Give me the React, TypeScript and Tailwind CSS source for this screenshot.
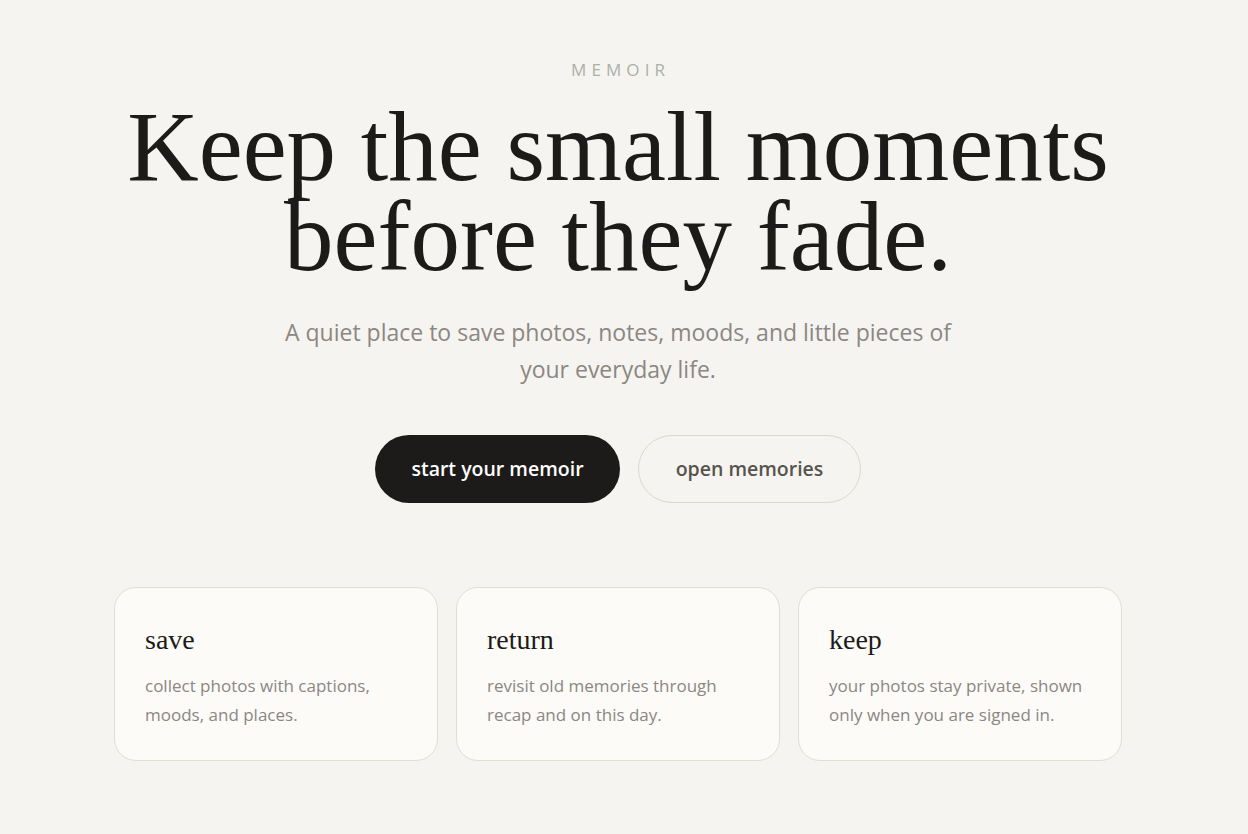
const serif = "font-['Georgia','Liberation_Serif','DejaVu_Serif',serif]";
const sans = "font-['Segoe_UI','Open_Sans','Noto_Sans',sans-serif]";

const features = [
  {
    title: "save",
    body: "collect photos with captions, moods, and places.",
  },
  {
    title: "return",
    body: "revisit old memories through recap and on this day.",
  },
  {
    title: "keep",
    body: "your photos stay private, shown only when you are signed in.",
  },
];

function FeatureCard({ title, body }: { title: string; body: string }) {
  return (
    <div className="rounded-[22px] border border-[#e2ddd5] bg-[#fcfbf8] px-[30px] pt-[33px] pb-[31px]">
      <h3 className={`${serif} text-[28px] leading-[38px] text-[#1c1b19]`}>
        {title}
      </h3>
      <p className={`${sans} mt-[12px] text-[17px] leading-[29px] text-[#8b8782]`}>
        {body}
      </p>
    </div>
  );
}

export default function App() {
  return (
    <div className="min-h-[834px] bg-[#f6f4f0] pr-[12px]">
      <div className="mx-auto flex max-w-[1008px] flex-col items-center pt-[57px]">
        <div className={`${sans} pl-[0.3em] text-[17px] tracking-[0.3em] text-[#aab1a8]`}>
          MEMOIR
        </div>

        <h1
          className={`${serif} mt-[19px] text-center text-[99px] leading-[90px] text-[#1c1b19]`}
        >
          Keep the small moments
          <br />
          before they fade.
        </h1>

        <p
          className={`${sans} mt-[32px] max-w-[700px] text-center text-[23px] leading-[37px] text-[#8b8782]`}
        >
          A quiet place to save photos, notes, moods, and little pieces of your
          everyday life.
        </p>

        <div className={`${sans} mt-[47px] flex gap-[18px]`}>
          <button className="h-[68px] w-[245px] rounded-full bg-[#1c1b19] text-[19.5px] font-semibold text-white">
            start your memoir
          </button>
          <button className="h-[68px] w-[223px] rounded-full border border-[#dcd7cf] text-[19.5px] font-semibold text-[#57534e]">
            open memories
          </button>
        </div>

        <div className="mt-[84px] grid w-full grid-cols-3 gap-[18px]">
          {features.map((f) => (
            <FeatureCard key={f.title} title={f.title} body={f.body} />
          ))}
        </div>
      </div>
    </div>
  );
}
